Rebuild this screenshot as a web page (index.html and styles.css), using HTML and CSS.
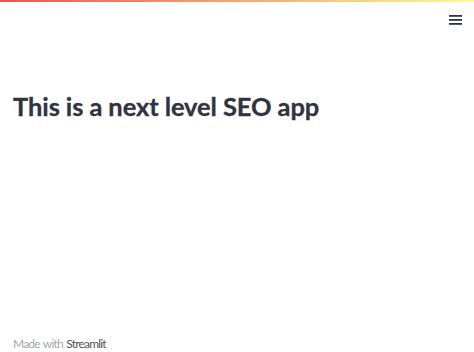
FILE: index.html
```html
<!DOCTYPE html>
<html>
<head>
<meta charset="utf-8">
<link rel="stylesheet" href="styles.css">
</head>
<body>
<div class="decoration"></div>
<header class="toolbar">
  <button class="menu" aria-label="Menu">
    <svg width="13" height="10" viewBox="0 0 13 10"><rect x="0" y="0" width="13" height="1.8" fill="#31333f"/><rect x="0" y="4" width="13" height="1.8" fill="#31333f"/><rect x="0" y="8" width="13" height="1.8" fill="#31333f"/></svg>
  </button>
</header>
<main class="main">
  <h1 class="title">This is a next level SEO app</h1>
</main>
<footer class="footer">Made with <a class="brand">Streamlit</a></footer>
</body>
</html>
```
FILE: styles.css
```css
html, body { margin: 0; padding: 0; height: 100%; }
body {
  font-family: Lato, "Open Sans", sans-serif;
  color: #31333f;
  background: #fff;
  display: flex;
  flex-direction: column;
  height: 352px;
  overflow: hidden;
}
.decoration {
  height: 2px;
  background: linear-gradient(90deg, #ff4b4b, #fffd80);
  flex: none;
}
.toolbar {
  display: flex;
  justify-content: flex-end;
  padding: 13px 12px 0 0;
  height: 28px;
  flex: none;
}
.menu {
  border: none;
  background: none;
  padding: 0;
  width: 13px;
  height: 10px;
  display: flex;
}
.main {
  flex: 1;
  padding: 0 13px;
}
.title {
  margin: 0;
  padding-top: 48px;
  font-size: 25.5px;
  font-weight: 700;
  line-height: 1.2;
  letter-spacing: -0.1px;
  -webkit-text-stroke: 0.3px #31333f;
}
.footer {
  flex: none;
  padding: 0 13px 2px;
  font-size: 12px;
  letter-spacing: -0.8px;
  word-spacing: 1px;
  color: #a3a8b4;
  height: 14px;
}
.brand { color: #555; }
```
